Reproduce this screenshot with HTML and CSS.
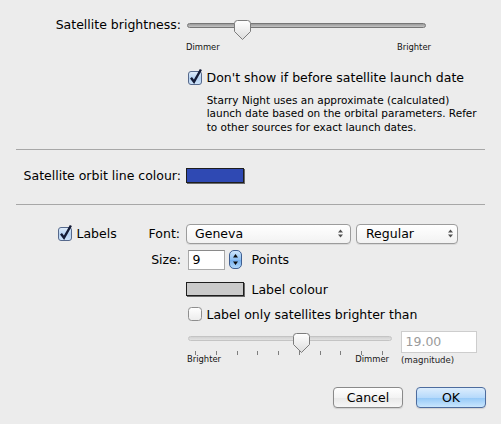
FILE: index.html
```html
<!DOCTYPE html>
<html>
<head>
<meta charset="utf-8">
<link rel="stylesheet" href="styles.css">
</head>
<body>
<svg class="defs" width="0" height="0" aria-hidden="true">
  <defs>
    <linearGradient id="gThumb" x1="0" y1="0" x2="0" y2="1">
      <stop offset="0" stop-color="#ffffff"/>
      <stop offset="1" stop-color="#dcdcdc"/>
    </linearGradient>
    <linearGradient id="gCheck" x1="0" y1="0" x2="0" y2="1">
      <stop offset="0" stop-color="#e2eefb"/>
      <stop offset="0.5" stop-color="#b5d2f2"/>
      <stop offset="1" stop-color="#cfe4fa"/>
    </linearGradient>
    <linearGradient id="gBox" x1="0" y1="0" x2="0" y2="1">
      <stop offset="0" stop-color="#ffffff"/>
      <stop offset="1" stop-color="#ececec"/>
    </linearGradient>
    <linearGradient id="gStep" x1="0" y1="0" x2="0" y2="1">
      <stop offset="0" stop-color="#d3e8fd"/>
      <stop offset="0.5" stop-color="#8fc0f3"/>
      <stop offset="0.51" stop-color="#72aded"/>
      <stop offset="1" stop-color="#b4dafb"/>
    </linearGradient>
  </defs>
</svg>

<div class="pane">
  <div class="grid row-bright">
    <div class="lbl lbl-top">Satellite brightness:</div>
    <div class="slider slider-main">
      <div class="track-wrap">
        <div class="track track-dark"></div>
        <svg class="thumb thumb-main" width="17" height="20" viewBox="0 0 17 20"><path d="M3.5 0.5 H13.5 Q16.5 0.5 16.5 3.5 V11.5 L8.5 19.5 L0.5 11.5 V3.5 Q0.5 0.5 3.5 0.5 Z" fill="url(#gThumb)" stroke="#7c7c7c"/></svg>
      </div>
      <div class="slider-labels"><span>Dimmer</span><span>Brighter</span></div>
    </div>
  </div>

  <div class="grid row-check1">
    <div></div>
    <div class="check">
      <svg class="cb" width="14" height="14" viewBox="0 0 14 14"><rect x="0.5" y="0.5" width="13" height="13" rx="2.5" fill="url(#gCheck)" stroke="#56698c"/><path d="M3 6.8 L6 10.8 L12.9 -1.5" fill="none" stroke="#141b36" stroke-width="2.4"/></svg>
      <span>Don't show if before satellite launch date</span>
    </div>
  </div>

  <div class="grid">
    <div></div>
    <p class="note">Starry Night uses an approximate (calculated)<br>launch date based on the orbital parameters. Refer<br>to other sources for exact launch dates.</p>
  </div>

  <hr class="sep sep1">

  <div class="grid row-orbit">
    <div class="lbl">Satellite orbit line colour:</div>
    <div class="well well-blue"></div>
  </div>

  <hr class="sep sep2">

  <div class="grid row-font">
    <div class="lbl-split">
      <div class="check check-labels">
        <svg class="cb" width="14" height="14" viewBox="0 0 14 14"><rect x="0.5" y="0.5" width="13" height="13" rx="2.5" fill="url(#gCheck)" stroke="#56698c"/><path d="M3 6.8 L6 10.8 L12.9 -1.5" fill="none" stroke="#141b36" stroke-width="2.4"/></svg>
        <span>Labels</span>
      </div>
      <span class="lbl-font">Font:</span>
    </div>
    <div class="popups">
      <div class="popup popup-font"><span>Geneva</span><svg width="5" height="9" viewBox="0 0 5 9"><path d="M0 3.6 L2.5 0.5 L5 3.6 Z M0 5.4 L2.5 8.5 L5 5.4 Z" fill="#505050"/></svg></div>
      <div class="popup popup-style"><span>Regular</span><svg width="5" height="9" viewBox="0 0 5 9"><path d="M0 3.6 L2.5 0.5 L5 3.6 Z M0 5.4 L2.5 8.5 L5 5.4 Z" fill="#505050"/></svg></div>
    </div>
  </div>

  <div class="grid row-size">
    <div class="lbl lbl-mid">Size:</div>
    <div class="size-ctl">
      <div class="field field-size">9</div>
      <svg class="stepper" width="13" height="19" viewBox="0 0 13 19"><rect x="0.5" y="0.5" width="12" height="18" rx="4.5" fill="url(#gStep)" stroke="#3f5f91"/><path d="M4 7.5 L6.5 4 L9 7.5 Z M4 11.5 L6.5 15 L9 11.5 Z" fill="#0c0c0c"/></svg>
      <span class="points">Points</span>
    </div>
  </div>

  <div class="grid row-lcolour">
    <div></div>
    <div class="lcolour">
      <div class="well well-grey"></div>
      <span>Label colour</span>
    </div>
  </div>

  <div class="grid row-check2">
    <div></div>
    <div class="check">
      <svg class="cb" width="14" height="14" viewBox="0 0 14 14"><rect x="0.5" y="0.5" width="13" height="13" rx="3" fill="url(#gBox)" stroke="#8e8e8e"/></svg>
      <span>Label only satellites brighter than</span>
    </div>
  </div>

  <div class="grid row-slider2">
    <div></div>
    <div class="slider2-row">
      <div class="slider slider-mag">
        <div class="track-wrap tw2">
          <div class="track track-light"></div>
          <div class="ticks"><i></i><i></i><i></i><i></i><i></i><i></i><i></i><i></i><i></i><i></i></div>
          <svg class="thumb thumb-mag" width="17" height="20" viewBox="0 0 17 20"><path d="M3.5 0.5 H13.5 Q16.5 0.5 16.5 3.5 V11.5 L8.5 19.5 L0.5 11.5 V3.5 Q0.5 0.5 3.5 0.5 Z" fill="url(#gThumb)" stroke="#7c7c7c"/></svg>
        </div>
        <div class="slider-labels sl2"><span>Brighter</span><span>Dimmer</span></div>
      </div>
      <div class="mag">
        <div class="field field-mag">19.00</div>
        <div class="mag-note">(magnitude)</div>
      </div>
    </div>
  </div>

  <div class="actions">
    <button class="btn">Cancel</button>
    <button class="btn btn-ok">OK</button>
  </div>
</div>
</body>
</html>
```

FILE: styles.css
```css
html, body {
  margin: 0;
  padding: 0;
}
body {
  width: 501px;
  height: 424px;
  overflow: hidden;
  background: #ececec;
  font-family: "DejaVu Sans", "Noto Sans", sans-serif;
  font-size: 12.5px;
  color: #000;
}
.defs {
  position: absolute;
}
.pane {
  padding: 14px 16px 0 16px;
}
.grid {
  display: grid;
  grid-template-columns: 165px 1fr;
  column-gap: 5px;
}
.lbl {
  text-align: right;
  line-height: 15px;
  white-space: nowrap;
}
.lbl-top {
  margin-top: 3px;
}

/* sliders */
.slider-main {
  width: 245px;
}
.track-wrap {
  display: flow-root;
  position: relative;
  height: 28px;
}
.track {
  height: 5px;
  box-sizing: border-box;
  border-radius: 3px;
}
.track-dark {
  margin: 9px 5px 0 1px;
  border: 1px solid #767676;
  background: linear-gradient(#9a9a9a, #c4c4c4);
}
.thumb {
  position: absolute;
  display: block;
}
.thumb-main {
  left: 48px;
  top: 6px;
}
.slider-labels {
  display: flex;
  justify-content: space-between;
  font-size: 8.4px;
  line-height: 11px;
  color: #111;
}

/* checkboxes */
.row-check1 {
  margin-top: 17px;
}
.check {
  display: flex;
  align-items: center;
  line-height: 15px;
  white-space: nowrap;
}
.check .cb {
  overflow: visible;
  margin-left: 2px;
  margin-right: 4.5px;
  flex: none;
}
.note {
  margin: 9px 0 0 20.7px;
  font-size: 10.5px;
  line-height: 13.3px;
  white-space: nowrap;
}

.sep {
  border: 0;
  height: 1px;
  background: #a7a7a7;
  margin: 0;
}
.sep1 {
  margin-top: 15px;
}
.row-orbit {
  margin-top: 18px;
}
.well {
  box-sizing: border-box;
  width: 58px;
  border: 1px solid #1e1e1e;
  box-shadow: 1px 1px 0 #6a6a6a;
}
.well-blue {
  height: 15px;
  background: #2f49b3;
}
.sep2 {
  margin-top: 21px;
}

/* labels section */
.row-font {
  margin-top: 19px;
  height: 20px;
}
.lbl-split {
  display: flex;
  align-items: center;
  justify-content: space-between;
}
.check-labels .cb {
  margin-left: 42px;
}
.lbl-font {
  line-height: 15px;
  margin-right: 1px;
}
.popups {
  display: flex;
  gap: 5px;
}
.popup {
  display: flex;
  align-items: center;
  justify-content: space-between;
  box-sizing: border-box;
  height: 20px;
  border: 1px solid #9c9c9c;
  border-radius: 4px;
  background: linear-gradient(#ffffff, #f2f2f2);
  box-shadow: 0 1px 0 rgba(0, 0, 0, 0.08);
  line-height: 15px;
}
.popup-font {
  width: 165px;
  padding: 0 7px 0 8px;
}
.popup-style {
  width: 102px;
  padding: 0 4px 0 9px;
}

.row-size {
  margin-top: 6px;
  height: 20px;
}
.lbl-mid {
  align-self: center;
}
.size-ctl {
  display: flex;
  align-items: center;
}
.field {
  box-sizing: border-box;
  background: #fff;
  border: 1px solid #a9a9a9;
  border-top-color: #8a8a8a;
}
.field-size {
  margin-left: 2px;
  width: 37px;
  height: 20px;
  padding-left: 3.5px;
  line-height: 18px;
}
.stepper {
  display: block;
  margin-left: 4px;
}
.points {
  margin-left: 9.5px;
  line-height: 15px;
}

.row-lcolour {
  margin-top: 12px;
}
.lcolour {
  display: flex;
  align-items: center;
  line-height: 15px;
}
.well-grey {
  height: 14px;
  background: #cacaca;
  margin-right: 7.5px;
}

.row-check2 {
  margin-top: 10px;
}

.row-slider2 {
  margin-top: 8px;
}
.slider2-row {
  display: flex;
  align-items: flex-start;
}
.slider-mag {
  width: 206px;
}
.tw2 {
  height: 24px;
}
.track-light {
  margin: 6px 0 0 2px;
  border: 1px solid #c4c4c4;
  background: linear-gradient(#d2d2d2, #e2e2e2);
}
.ticks {
  display: flex;
  justify-content: space-between;
  margin: 10px 9px 0 9.2px;
  height: 4px;
}
.ticks i {
  display: block;
  width: 1px;
  height: 4px;
  background: #7e7e7e;
}
.thumb-mag {
  left: 106.7px;
  top: 3px;
}
.sl2 {
  padding: 0 3px 0 1px;
}
.mag {
  margin-left: 9px;
}
.field-mag {
  margin-top: 1px;
  width: 76px;
  height: 22px;
  border-color: #cdcdcd;
  padding-left: 3.5px;
  line-height: 20px;
  color: #9b9b9b;
}
.mag-note {
  margin-top: 2px;
  font-size: 8.6px;
  line-height: 11px;
  color: #222;
}

/* buttons */
.actions {
  display: flex;
  justify-content: flex-end;
  gap: 13px;
  margin-top: 21px;
  margin-right: -1px;
}
.btn {
  box-sizing: border-box;
  width: 70px;
  height: 21px;
  padding: 0;
  border: 1px solid #8a8a8a;
  border-radius: 4px;
  background: linear-gradient(#ffffff, #f3f3f3 50%, #e8e8e8 51%, #f6f6f6);
  box-shadow: 0 1px 1px rgba(0, 0, 0, 0.12);
  font-family: "DejaVu Sans", "Noto Sans", sans-serif;
  font-size: 12.5px;
  line-height: 17px;
  color: #000;
}
.btn-ok {
  border-color: #4d6c9e;
  background: linear-gradient(#dcedfd, #b7dafb 50%, #94c8f7 51%, #c9e6fd);
}
```
